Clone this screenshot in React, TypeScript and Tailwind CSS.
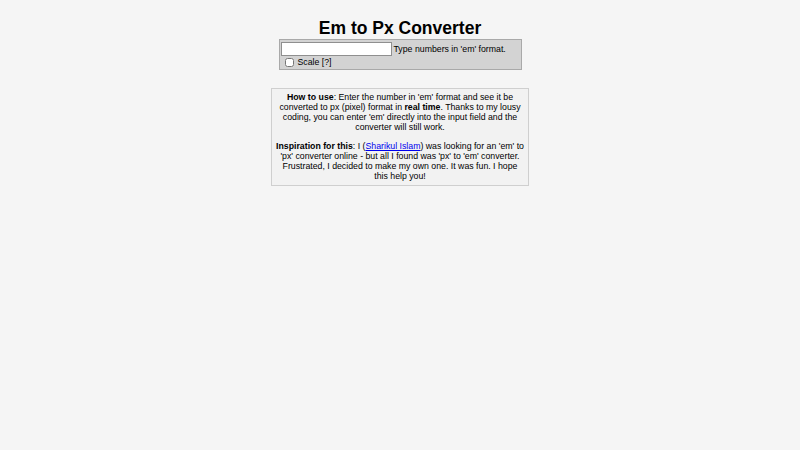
export default function App() {
  return (
    <div
      className="flex min-h-screen flex-col items-center bg-[#f5f5f5] text-black"
      style={{ fontFamily: '"Liberation Sans", Arial, sans-serif' }}
    >
      <h1 className="pt-[18px] text-[17.5px] leading-[21px] font-bold">Em to Px Converter</h1>

      <div className="w-[243px] border border-[#a9a9a9] bg-[#d3d3d3] pr-[2px] pl-[1px] pt-[2px] pb-[2px] text-[8.75px] leading-[10px]">
        <div className="flex items-center gap-[2px]">
          <input
            type="text"
            className="h-[14px] w-[111px] border border-[#8f8f8f] bg-white px-[2px] text-[9px] outline-none"
          />
          <span>Type numbers in 'em' format.</span>
        </div>
        <label className="mt-[1px] flex items-center gap-[4px] pl-[4px]">
          <input type="checkbox" className="m-0 h-[9px] w-[9px]" />
          <span>Scale [?]</span>
        </label>
      </div>

      <div className="mt-[18px] w-[258px] border border-[#cfcfcf] bg-[#f2f2f2] px-[4px] pt-[3px] pb-[4px] text-center text-[8.75px] leading-[10px]">
        <p>
          <b>How to use</b>: Enter the number in 'em' format and see it be converted to px (pixel)
          format in <b>real time</b>. Thanks to my lousy coding, you can enter 'em' directly into the
          input field and the converter will still work.
        </p>
        <p className="mt-[9px]">
          <b>Inspiration for this</b>: I (<a href="#" className="text-[#0000ee] underline">Sharikul Islam</a>) was
          looking for an 'em' to 'px' converter online - but all I found was 'px' to 'em' converter.
          Frustrated, I decided to make my own one. It was fun. I hope this help you!
        </p>
      </div>
    </div>
  );
}
